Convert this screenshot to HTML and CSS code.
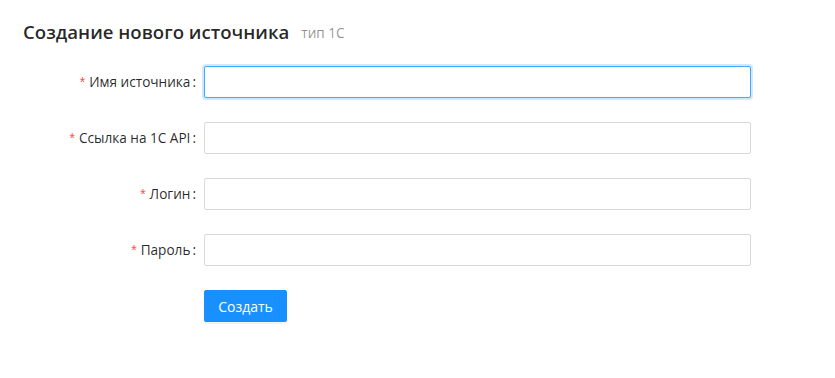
FILE: index.html
```html
<!DOCTYPE html>
<html lang="ru">
	<head>
		<meta charset="UTF-8">
		<title>Создание нового источника</title>
		<link rel="stylesheet" href="styles.css">
	</head>
	<body>
		<div class="page">
			<div class="header">
				<span class="title">Создание нового источника</span>
				<span class="subtitle">тип 1С</span>
			</div>
			<form class="form">
				<div class="row">
					<label class="label" for="name"><span class="req">*</span>Имя источника<span class="colon">:</span></label>
					<input class="input focused" id="name" type="text">
				</div>
				<div class="row">
					<label class="label" for="url"><span class="req">*</span>Ссылка на 1С API<span class="colon">:</span></label>
					<input class="input" id="url" type="text">
				</div>
				<div class="row">
					<label class="label" for="login"><span class="req">*</span>Логин<span class="colon">:</span></label>
					<input class="input" id="login" type="text">
				</div>
				<div class="row">
					<label class="label" for="pass"><span class="req">*</span>Пароль<span class="colon">:</span></label>
					<input class="input" id="pass" type="password">
				</div>
				<div class="row">
					<span></span>
					<div><button type="submit" class="btn">Создать</button></div>
				</div>
			</form>
		</div>
	</body>
</html>
```
FILE: styles.css
```css
body{
	margin:0;
	background:#fff;
	font-family:"Open Sans", "Noto Sans", sans-serif;
	font-size:13.6px;
	color:rgba(0,0,0,.85);
}
.header{
	padding:16px 23px 0;
	height:32px;
	display:flex;
	align-items:center;
}
.title{
	font-size:18.6px;
	font-weight:600;
	line-height:32px;
	margin-right:12px;
}
.subtitle{
	font-size:13.6px;
	color:rgba(0,0,0,.45);
}
.form{
	margin-top:18px;
}
.row{
	display:grid;
	grid-template-columns:204px 547px;
	align-items:center;
	margin-bottom:24px;
}
.label{
	text-align:right;
	line-height:32px;
	white-space:nowrap;
}
.req{
	color:#ff4d4f;
	margin-right:4px;
	font-family:"Liberation Sans", sans-serif;
	font-size:14px;
}
.colon{
	margin:0 8px 0 2px;
}
.input{
	box-sizing:border-box;
	height:32px;
	width:547px;
	border:1px solid #d9d9d9;
	border-radius:2px;
	padding:4px 11px;
	font:inherit;
	outline:none;
}
.input.focused{
	border-color:#40a9ff;
	box-shadow:0 0 0 2px rgba(24,144,255,.2);
}
.btn{
	height:32px;
	width:83px;
	border:1px solid #1890ff;
	background:#1890ff;
	color:#fff;
	border-radius:2px;
	font:inherit;
	font-size:14px;
	box-shadow:0 2px 0 rgba(0,0,0,.045);
	padding:0;
}
```
